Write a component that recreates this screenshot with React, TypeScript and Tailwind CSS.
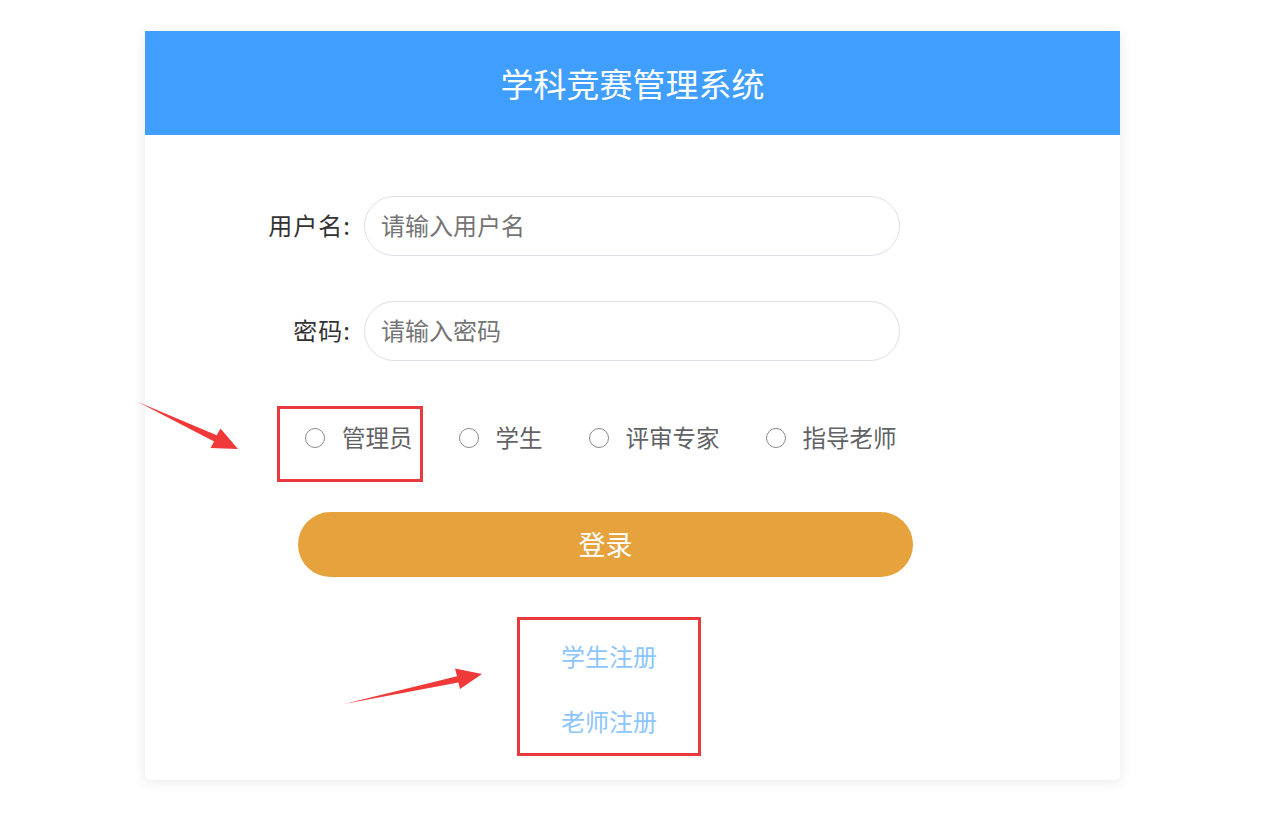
import React from "react";

const font = { fontFamily: '"Noto Sans CJK SC", "Noto Sans", sans-serif' };

function Radio({ label, className = "" }: { label: string; className?: string }) {
  return (
    <label className={"flex items-center " + className}>
      <span className="w-[20px] h-[20px] rounded-full border border-[#8a8a8a] bg-white box-border" />
      <span className="ml-[17px] text-[23.5px] leading-[30px] text-[#606266] pb-[2px]">{label}</span>
    </label>
  );
}

export default function App() {
  return (
    <div className="relative min-h-[817px] bg-white" style={font}>
      <div className="pt-[31px]">
        <div className="ml-[145px] w-[975px] bg-white rounded-b-[5px] shadow-[0_2px_14px_rgba(0,0,0,0.09)] pb-[39px]">
          <div className="h-[104px] bg-[#409EFF] flex items-center justify-center">
            <span className="text-white text-[33px] leading-none">学科竞赛管理系统</span>
          </div>

          <div className="pt-[61px]">
            <div className="flex items-center h-[60px]">
              <div className="w-[219px] pr-[13px] text-right text-[24px] text-[#333] pb-[3px] tracking-[1px]">用户名:</div>
              <input
                className="w-[536px] h-[60px] rounded-full border border-[#dcdfe6] pl-[16px] pr-[16px] pb-[3px] text-[24px] text-[#333] placeholder:text-[#757575] outline-none"
                placeholder="请输入用户名"
                style={font}
              />
            </div>
            <div className="flex items-center h-[60px] mt-[45px]">
              <div className="w-[219px] pr-[13px] text-right text-[24px] text-[#333] pb-[3px] tracking-[1px]">密码:</div>
              <input
                type="password"
                className="w-[536px] h-[60px] rounded-full border border-[#dcdfe6] pl-[16px] pr-[16px] pb-[3px] text-[24px] text-[#333] placeholder:text-[#757575] outline-none"
                placeholder="请输入密码"
                style={font}
              />
            </div>

            <div className="flex items-center h-[30px] mt-[62px] pl-[160px]">
              <Radio label="管理员" />
              <Radio label="学生" className="ml-[46px]" />
              <Radio label="评审专家" className="ml-[46px]" />
              <Radio label="指导老师" className="ml-[46px]" />
            </div>

            <button
              className="block ml-[153px] mt-[59px] w-[615px] h-[65px] rounded-full bg-[#E6A23C] text-white text-[27px]"
              style={font}
            >
              登录
            </button>

            <div className="ml-[153px] w-[615px] pl-[7px] mt-[59px] flex flex-col items-center">
              <div className="h-[40px] leading-[40px] text-[24px] text-[#8cc5ff] pb-[2px]">学生注册</div>
              <div className="h-[40px] leading-[40px] text-[24px] text-[#8cc5ff] mt-[25px] pb-[2px]">老师注册</div>
            </div>
          </div>
        </div>
      </div>

      {/* annotation overlays */}
      <div className="absolute left-[277px] top-[406px] w-[146px] h-[76px] border-[3px] border-[#e8393c] pointer-events-none" />
      <div className="absolute left-[517px] top-[617px] w-[184px] h-[139px] border-[3px] border-[#e8393c] pointer-events-none" />
      <svg className="absolute left-0 top-0 pointer-events-none" width="1279" height="817">
        <polygon
          fill="#f03a3a"
          points="138,402 216.7,435.2 220.5,428.5 238,449 210.5,448 214.1,441.6"
        />
        <polygon
          fill="#f03a3a"
          points="344,704 457,676.2 455,668.5 482,674 460,689 458.4,682.6"
        />
      </svg>
    </div>
  );
}
